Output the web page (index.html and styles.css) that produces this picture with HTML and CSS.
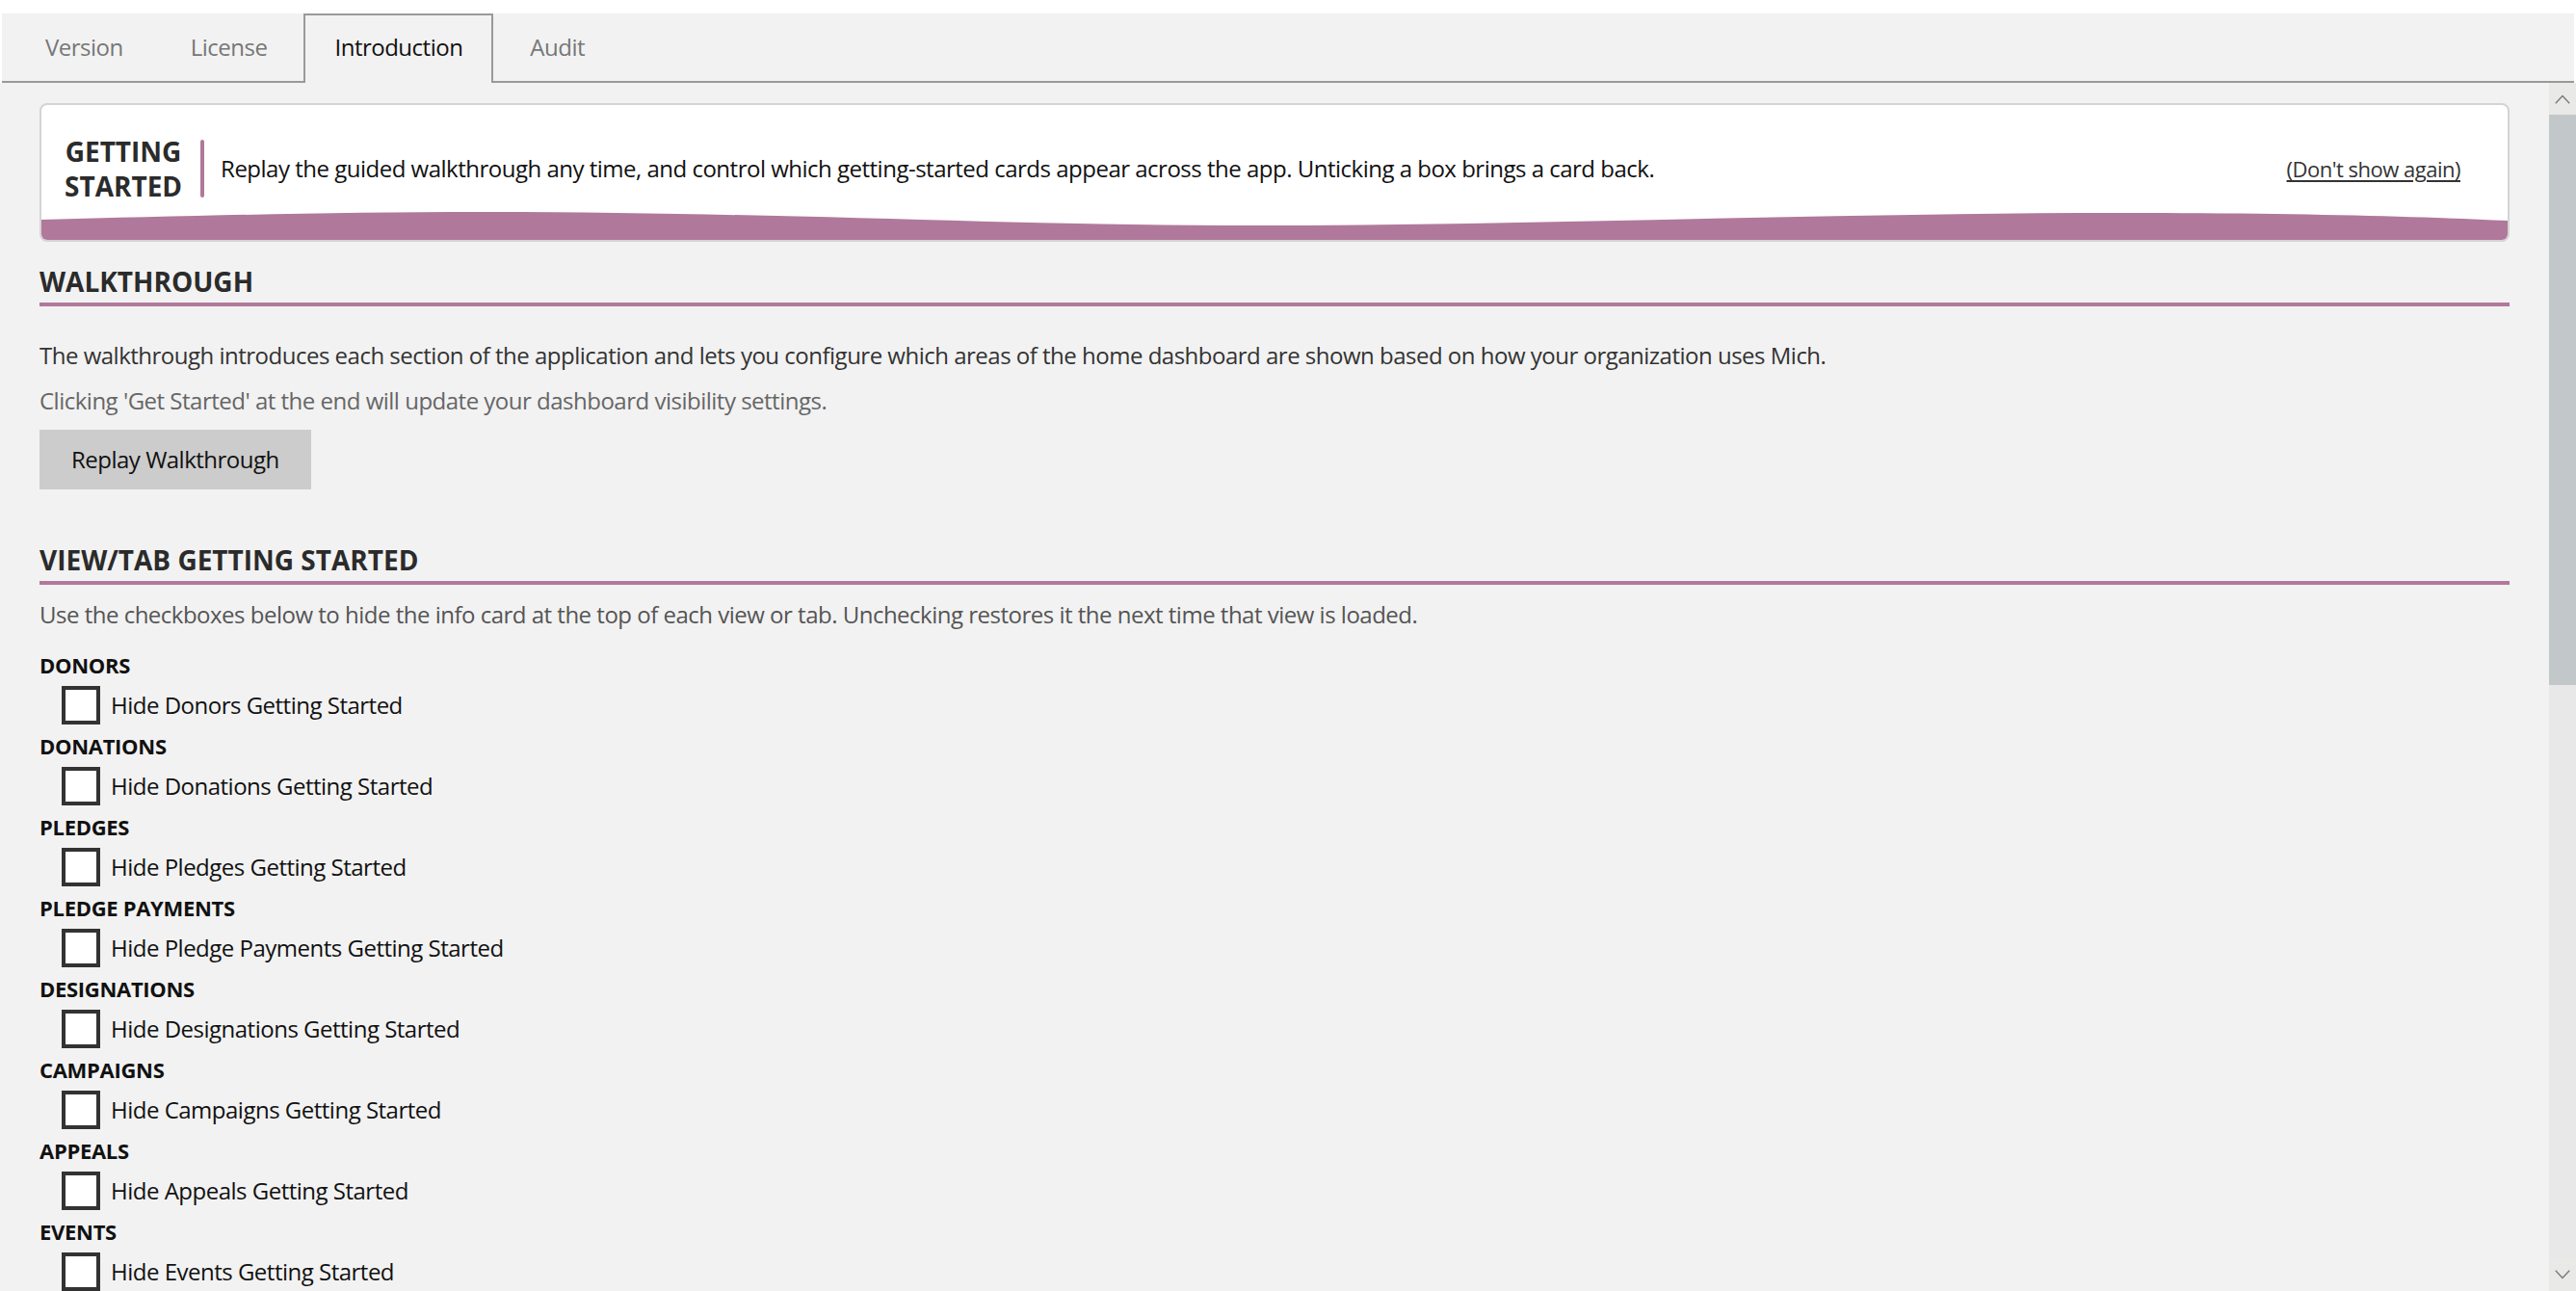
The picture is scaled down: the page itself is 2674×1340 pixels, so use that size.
FILE: index.html
```html
<!DOCTYPE html>
<html lang="en">
<head>
<meta charset="utf-8">
<title>Introduction</title>
<link rel="stylesheet" href="styles.css">
</head>
<body>
<div class="app">
  <nav class="tabs">
    <a class="tab">Version</a>
    <a class="tab">License</a>
    <a class="tab active">Introduction</a>
    <a class="tab">Audit</a>
  </nav>
  <div class="main">
    <div class="content">
      <section class="card">
        <div class="card-row">
          <div class="card-title">GETTING<br>STARTED</div>
          <div class="card-bar"></div>
          <div class="card-text">Replay the guided walkthrough any time, and control which getting-started cards appear across the app. Unticking a box brings a card back.</div>
          <a class="card-link">(Don't show again)</a>
        </div>
        <svg class="card-wave" viewBox="0 0 2560 33" preserveAspectRatio="none" aria-hidden="true">
          <path d="M0,12 C160,8 300,4 457,4 C760,4 1000,18 1257,18 C1560,18 1850,5 2157,5 C2340,5 2470,9 2560,13 L2560,33 L0,33 Z" fill="#b0799b"/>
        </svg>
      </section>

      <h2 class="section-title first">WALKTHROUGH</h2>
      <p class="text dark">The walkthrough introduces each section of the application and lets you configure which areas of the home dashboard are shown based on how your organization uses Mich.</p>
      <p class="text light">Clicking 'Get Started' at the end will update your dashboard visibility settings.</p>
      <button class="btn">Replay Walkthrough</button>

      <h2 class="section-title second">VIEW/TAB GETTING STARTED</h2>
      <p class="text desc">Use the checkboxes below to hide the info card at the top of each view or tab. Unchecking restores it the next time that view is loaded.</p>

      <div class="groups">
        <div class="group">
          <div class="group-title">DONORS</div>
          <label class="check-row"><span class="check"></span><span class="check-label">Hide Donors Getting Started</span></label>
        </div>
        <div class="group">
          <div class="group-title">DONATIONS</div>
          <label class="check-row"><span class="check"></span><span class="check-label">Hide Donations Getting Started</span></label>
        </div>
        <div class="group">
          <div class="group-title">PLEDGES</div>
          <label class="check-row"><span class="check"></span><span class="check-label">Hide Pledges Getting Started</span></label>
        </div>
        <div class="group">
          <div class="group-title">PLEDGE PAYMENTS</div>
          <label class="check-row"><span class="check"></span><span class="check-label">Hide Pledge Payments Getting Started</span></label>
        </div>
        <div class="group">
          <div class="group-title">DESIGNATIONS</div>
          <label class="check-row"><span class="check"></span><span class="check-label">Hide Designations Getting Started</span></label>
        </div>
        <div class="group">
          <div class="group-title">CAMPAIGNS</div>
          <label class="check-row"><span class="check"></span><span class="check-label">Hide Campaigns Getting Started</span></label>
        </div>
        <div class="group">
          <div class="group-title">APPEALS</div>
          <label class="check-row"><span class="check"></span><span class="check-label">Hide Appeals Getting Started</span></label>
        </div>
        <div class="group">
          <div class="group-title">EVENTS</div>
          <label class="check-row"><span class="check"></span><span class="check-label">Hide Events Getting Started</span></label>
        </div>
      </div>
    </div>
    <div class="scrollbar" aria-hidden="true">
      <div class="sb-btn sb-up">
        <svg width="16" height="10" viewBox="0 0 16 10"><path d="M0.8,9.2 L8,1.5 L15.2,9.2" fill="none" stroke="#7a7a7a" stroke-width="1.4"/></svg>
      </div>
      <div class="sb-thumb"></div>
      <div class="sb-track"></div>
      <div class="sb-btn sb-down">
        <svg width="16" height="10" viewBox="0 0 16 10"><path d="M0.8,0.8 L8,8.5 L15.2,0.8" fill="none" stroke="#7a7a7a" stroke-width="1.4"/></svg>
      </div>
    </div>
  </div>
</div>
</body>
</html>
```
FILE: styles.css
```css
* { box-sizing: border-box; }

html, body {
  margin: 0;
  padding: 0;
  height: 1340px;
  overflow: hidden;
  background: #ffffff;
}

body {
  font-family: "Segoe UI", "Open Sans", "Noto Sans", sans-serif;
  font-size: 24px;
  letter-spacing: -0.5px;
  color: #111;
  padding-top: 14px;
}

.app {
  display: flex;
  flex-direction: column;
  height: 1326px;
}

/* Tabs */
.tabs {
  display: flex;
  height: 72px;
  margin: 0 2px;
  padding-left: 13px;
  background: #f2f2f2;
  border-bottom: 2px solid #999;
  flex-shrink: 0;
}

.tab {
  display: block;
  padding: 16px 30px 0;
  margin-right: 6px;
  border: 2px solid transparent;
  border-bottom: 0;
  line-height: 34px;
  color: #777;
  cursor: pointer;
}

.tab.active {
  color: #111;
  background: #f2f2f2;
  border-color: #999;
  margin-bottom: -2px;
  height: 72px;
}

/* Main */
.main {
  flex: 1;
  display: flex;
  min-height: 0;
  background: #f2f2f2;
}

.content {
  flex: 1;
  min-width: 0;
  overflow: hidden;
  padding: 21px 41px 0 41px;
}

/* Getting started card */
.card {
  display: flex;
  flex-direction: column;
  background: #fff;
  border: 2px solid #d4d4d4;
  border-radius: 8px;
  overflow: hidden;
}

.card-row {
  display: flex;
  align-items: center;
  padding: 30px 49px 5px 24px;
  height: 107px;
}

.card-title {
  font-size: 28px;
  font-weight: 700;
  line-height: 36px;
  text-align: center;
  color: #2b2b2b;
  letter-spacing: 0;
}

.card-bar {
  width: 4px;
  height: 60px;
  border-radius: 2px;
  background: #b0799b;
  margin: 0 17px 0 19px;
  flex-shrink: 0;
}

.card-text {
  line-height: 32px;
  color: #111;
}

.card-link {
  margin-left: auto;
  font-size: 22px;
  line-height: 32px;
  color: #333;
  text-decoration: underline;
  text-underline-offset: 3px;
  text-decoration-thickness: 1.5px;
  cursor: pointer;
}

.card-wave {
  display: block;
  width: 100%;
  height: 33px;
}

/* Sections */
.section-title {
  margin: 0;
  font-size: 28px;
  font-weight: 700;
  line-height: 32px;
  color: #2b2b2b;
  letter-spacing: 0;
  padding-bottom: 6px;
  border-bottom: 4px solid #b0799b;
}

.section-title.first { margin-top: 25px; }
.section-title.second { margin-top: 57px; }

.text {
  margin: 0;
  line-height: 32px;
}

.text.dark { margin-top: 35px; color: #333; }
.text.light { margin-top: 15px; color: #666; }
.text.desc { margin-top: 15px; color: #555; }

.btn {
  display: block;
  margin-top: 14px;
  height: 62px;
  padding: 0 33px;
  border: 0;
  border-radius: 0;
  background: #cccccc;
  font: inherit;
  letter-spacing: inherit;
  line-height: 62px;
  color: #111;
  cursor: pointer;
}

/* Checkbox groups */
.groups {
  margin-top: 22px;
}

.group-title {
  font-size: 22px;
  font-weight: 700;
  line-height: 28px;
  color: #111;
  letter-spacing: -0.3px;
}

.check-row {
  display: flex;
  align-items: center;
  padding: 8px 0 8px 23px;
}

.check {
  width: 40px;
  height: 40px;
  border: 4px solid #333;
  background: #fff;
  flex-shrink: 0;
}

.check-label {
  margin-left: 11px;
  line-height: 32px;
  color: #111;
}

/* Scrollbar */
.scrollbar {
  width: 28px;
  flex-shrink: 0;
  display: flex;
  flex-direction: column;
  background: #e8e8e8;
}

.sb-btn {
  display: flex;
  align-items: center;
  justify-content: center;
  background: #e9e9e7;
  flex-shrink: 0;
}

.sb-up { height: 33px; }
.sb-down { height: 34px; }

.sb-thumb {
  height: 592px;
  background: #c2c7ca;
  flex-shrink: 0;
}

.sb-track {
  flex: 1;
  background: #e8e8e8;
}
```
